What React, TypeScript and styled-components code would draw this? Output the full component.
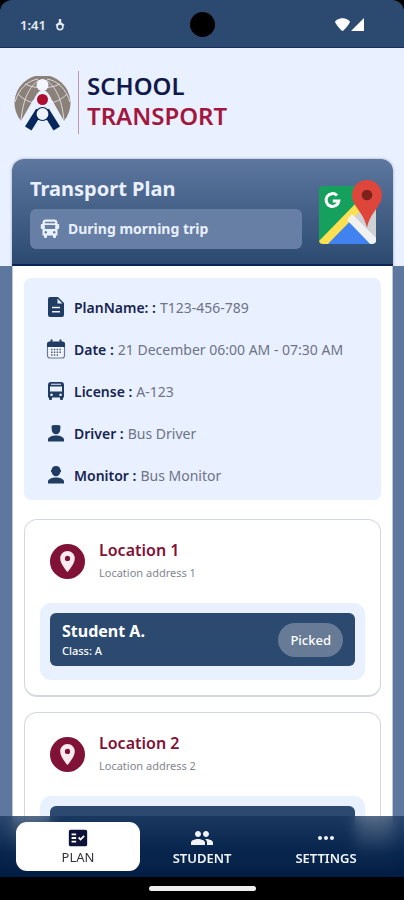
import React from "react";
import styled, { createGlobalStyle, css } from "styled-components";
import { MdFactCheck, MdLocationOn, MdMoreHoriz, MdPeople } from "react-icons/md";

const color = {
  navy: "#2c4a70",
  slate: "#5d779f",
  pale: "#e9f0ff",
  ink: "#162450",
  wine: "#7f1236",
  grey: "#6d7388",
};

const GlobalStyle = createGlobalStyle`
  * { box-sizing: border-box; }
  html, body, #root { height: 100%; }
  body {
    margin: 0;
    background: #000;
    font-family: "Noto Sans", "Open Sans", sans-serif;
    color: ${color.ink};
  }
  h1, h2, h3, p, dl, dt, dd, ul { margin: 0; padding: 0; font-size: inherit; }
  svg { display: block; flex: none; }
`;

const Screen = styled.div`
  display: flex;
  flex-direction: column;
  height: 100vh;
  overflow: hidden;
`;

const StatusBar = styled.header`
  flex: none;
  display: grid;
  grid-template-columns: 1fr auto 1fr;
  align-items: center;
  height: 48px;
  padding: 2px 40px 0 20px;
  background: ${color.navy};
  border-bottom: 1px solid #17305c;
  border-radius: 12px 12px 0 0;
  color: #e6eaf1;
`;

const Clock = styled.div`
  display: flex;
  align-items: center;
  gap: 9px;
  font-size: 13px;
  font-weight: 600;
`;

const Camera = styled.div`
  width: 25px;
  height: 25px;
  margin-left: 20px;
  border-radius: 50%;
  background: #000;
`;

const Signals = styled.div`
  display: flex;
  justify-content: flex-end;
  gap: 1px;
`;

const Viewport = styled.main`
  flex: 1;
  min-height: 0;
  overflow: auto;
  scrollbar-width: none;
  padding-bottom: 84px;
  margin-bottom: -84px;
  background: ${color.slate};
`;

const Top = styled.div`
  padding: 0 11px 0 12px;
  background: ${color.pale};
`;

const Brand = styled.div`
  display: flex;
  align-items: center;
  height: 111px;
  padding-left: 2px;
`;

const BrandName = styled.h1`
  display: flex;
  flex-direction: column;
  margin-left: 7px;
  padding: 0 0 3px 8px;
  border-left: 1px solid #c295aa;
  font-size: 24px;
  line-height: 30px;
  margin-top: -2px;
  font-weight: 600;
  color: #10194a;
`;

const BrandAccent = styled.span`
  color: #a3173f;
`;

const Hero = styled.section`
  display: flex;
  align-items: center;
  gap: 16px;
  height: 107px;
  padding: 0 10px 0 18px;
  border-radius: 12px 12px 0 0;
  border-bottom: 2px solid #0e2357;
  background: linear-gradient(#5d779f, ${color.navy});
  box-shadow: 0 0 3px rgba(30, 50, 90, 0.4);
`;

const HeroText = styled.div`
  flex: 1;
  display: flex;
  flex-direction: column;
  gap: 6px;
  color: ${color.pale};
`;

const HeroTitle = styled.h2`
  font-size: 20px;
  line-height: 28px;
  font-weight: 700;
`;

const Trip = styled.p`
  display: flex;
  align-items: center;
  gap: 8px;
  height: 40px;
  padding: 0 10px;
  border-radius: 6px;
  background: #677ea5;
  font-size: 14px;
  font-weight: 700;
`;

const MapButton = styled.button`
  padding: 2px 0 0;
  border: 0;
  background: none;
`;

const Sheet = styled.div`
  display: flex;
  flex-direction: column;
  gap: 15px;
  margin: 0 11px 0 12px;
  padding: 12px 11px;
  background: #fff;
  border-left: 1px solid #bcc8dc;
  border-right: 1px solid #bcc8dc;
`;

const Details = styled.dl`
  margin-bottom: 4px;
  padding: 8px 22px 4px;
  border-radius: 7px;
  background: ${color.pale};
`;

const DetailRow = styled.div`
  display: flex;
  align-items: center;
  height: 42px;
  font-size: 14px;
  color: #203c63;
`;

const DetailLabel = styled.dt`
  margin: 0 4px 0 8px;
  font-weight: 600;
  white-space: nowrap;
  color: ${color.ink};
`;

const DetailValue = styled.dd`
  white-space: nowrap;
  color: ${color.grey};
`;

const Stops = styled.ul`
  display: flex;
  flex-direction: column;
  gap: 15px;
  list-style: none;
`;

const StopCard = styled.li`
  padding: 16px 15px 15px;
  border: 1px solid #d3d7df;
  border-bottom-width: 2px;
  border-radius: 13px;
`;

const StopHead = styled.div`
  display: flex;
  align-items: center;
  gap: 14px;
  height: 50px;
  margin-bottom: 17px;
  padding-left: 10px;
`;

const PinBadge = styled.span`
  display: grid;
  place-items: center;
  width: 35px;
  height: 35px;
  border-radius: 50%;
  background: ${color.wine};
  color: #fdeaf0;
`;

const StopName = styled.h3`
  font-size: 16px;
  line-height: 24px;
  font-weight: 600;
  color: ${color.wine};
`;

const StopAddress = styled.p`
  font-size: 11px;
  line-height: 22px;
  color: #83868f;
`;

const StudentTray = styled.div`
  padding: 10px 10px 14px;
  border-radius: 11px;
  background: ${color.pale};
`;

const StudentRow = styled.div`
  display: flex;
  align-items: center;
  justify-content: space-between;
  height: 53px;
  padding: 0 12px;
  border-radius: 6px;
  background: ${color.navy};
  color: #fff;
`;

const StudentName = styled.p`
  font-size: 16px;
  line-height: 22px;
  font-weight: 700;
`;

const StudentClass = styled.p`
  font-size: 11px;
  line-height: 18px;
  font-weight: 500;
`;

const StatusPill = styled.button`
  height: 34px;
  padding: 0 12px;
  border: 0;
  border-radius: 17px;
  background: #677b96;
  color: #fff;
  font: 500 13px "Noto Sans", sans-serif;
`;

const Dock = styled.nav`
  position: relative;
  flex: none;
  display: grid;
  grid-template-columns: repeat(3, 1fr);
  height: 61px;
  padding: 6px 16px;
  background: linear-gradient(rgba(20, 50, 90, 0.72), rgba(4, 34, 74, 0.96) 60%, #001c42);
  backdrop-filter: blur(7px);
`;

const Tab = styled.button<{ $active?: boolean }>`
  display: flex;
  flex-direction: column;
  align-items: center;
  justify-content: center;
  padding: 0 0 2px;
  border: 0;
  border-radius: 11px;
  background: none;
  color: #f1f4fa;
  font: 600 13px/16px "Noto Sans", sans-serif;
  ${(p) =>
    p.$active &&
    css`
      background: #fff;
      color: #30323c;
      font-weight: 400;
      svg { color: #0c1238; }
    `}
`;

const GestureBar = styled.footer`
  position: relative;
  flex: none;
  display: grid;
  place-items: center;
  height: 23px;
  background: #000;
`;

const Handle = styled.div`
  width: 107px;
  height: 5px;
  border-radius: 3px;
  background: #eee;
`;

const DebugIcon = () => (
  <svg width="10" height="12" viewBox="0 0 10 12" fill="none" stroke="currentColor" strokeWidth="1.6">
    <path d="M5 0v4" strokeWidth="2.400" />
    <path d="M1 6.300 5 3.500l4 2.800" />
    <circle cx="5" cy="7.800" r="2.900" />
  </svg>
);

const WifiIcon = () => (
  <svg width="15" height="13" viewBox="0 0 15 13" fill="#fff">
    <path d="M0 4Q0 3 2 1.800C5-.4 10-.4 13 1.800Q15 3 15 4 13.500 7.500 8.500 12.400q-1 .8-2 0Q1.500 7.500 0 4z" />
  </svg>
);

const CellIcon = () => (
  <svg width="13" height="13" viewBox="0 0 13 13" fill="#fff">
    <path d="M13 0v13H0z" />
  </svg>
);

const GlobeLogo = () => (
  <svg width="57" height="55" viewBox="0 0 57 55" role="img" aria-label="School Transport logo">
    <path d="M7 45A28 28 0 1 1 50 45L38 24H19z" fill="#8c8179" />
    <g fill="none" stroke="#e3e4ea" strokeWidth="0.9">
      <path d="M25 4C16 10 9 22 7 45M32 4c9 6 16 18 18 41M24 3C13 5 5 13 1 26M33 3c11 2 19 10 23 23" />
      <path d="M11 8c10 5 25 5 35 0M4 18c6 6 11 8 17 9M53 18c-6 6-11 8-17 9" />
    </g>
    <path d="M28.500 14c-3 0-5 3-7 6L6 53h45L36 20c-2-3-4-6-7.500-6z" fill="#e9f0ff" />
    <circle cx="28.500" cy="9" r="6" fill="#f4f7ff" />
    <circle cx="28.500" cy="23.500" r="5.500" fill="#ad0d2e" />
    <path d="M11 50.500 22 33h13l11 17.500-6.500 4L33 44h-9l-6.500 10.500z" fill="#08285b" />
    <circle cx="28.500" cy="38" r="6.500" fill="#edf2ff" stroke="#08285b" strokeWidth="1.200" />
  </svg>
);

const MapLogo = () => (
  <svg width="65" height="65" viewBox="0 0 65 65">
    <defs>
      <clipPath id="tile">
        <rect x="1" y="6" width="57" height="58" rx="4" />
      </clipPath>
    </defs>
    <g clipPath="url(#tile)">
      <path d="M0 5h60v60H0z" fill="#16a05d" />
      <path d="M28 40 60 12v53z" fill="#cfd0d3" />
      <path d="M29 40 58 69H0z" fill="#3f82f0" />
      <path d="M-1 63 42 19l6 6L5 69z" fill="#fbe052" />
      <path d="m29 40 5-6 28 28-6 6z" fill="#f1f1f2" />
    </g>
    <path d="M19 15.500a6.400 6.400 0 1 0 1.800 5.500h-6" fill="none" stroke="#fff" strokeWidth="3" />
    <path d="M49 0C40.500 0 34 6.800 34 15c0 11.500 12 17 15 33 3-16 15-21.500 15-33C64 6.800 57.500 0 49 0z" fill="#de463b" />
    <circle cx="49" cy="15" r="5.300" fill="#7d211a" />
  </svg>
);

const TripBusIcon = () => (
  <svg width="20" height="20" viewBox="0 0 20 20" fill="currentColor">
    <path
      fillRule="evenodd"
      d="M5 .5h10q2.500.3 2.500 3V5h.8q.9 0 .9 1v3q0 1-.9 1h-.8v6.500H16V18q0 1-1 1h-1q-1 0-1-1v-1.500H7V18q0 1-1 1H5q-1 0-1-1v-1.500H2.500V10h-.8q-.9 0-.9-1V6q0-1 .9-1h.8V3.500q0-2.700 2.500-3zM5 2.800v1.400h10V2.800zM4.800 6v4h10.400V6zM5.700 12a1.300 1.300 0 1 0 .1 0zM14.200 12a1.300 1.300 0 1 0 .1 0z"
    />
  </svg>
);

const PlanIcon = () => (
  <svg width="20" height="20" viewBox="0 0 20 20" fill="currentColor">
    <path
      fillRule="evenodd"
      d="M4 0h8l6 6v12q0 2-2 2H4q-2 0-2-2V2q0-2 2-2zM11.500 1.500V6.500h5zM6 9.800v1.500h8V9.800zM6 14v1.500h8V14z"
    />
  </svg>
);

const CalendarIcon = () => (
  <svg width="20" height="20" viewBox="0 0 20 20">
    <rect x="1.500" y="3.500" width="17" height="15.500" rx="2.500" fill="#f1f5ff" stroke="#6a7890" strokeWidth="1.200" />
    <path d="M1 8V5q0-2.500 2.500-2.500h13Q19 2.500 19 5v3z" fill="#203c63" />
    <path d="M5.500.5v4M14.500.5v4" stroke="#203c63" strokeWidth="2" />
    <path d="M5 10.500h1.500m1.300 0h1.500m1.300 0h1.500m1.300 0h1.500M5 13.300h1.500m1.300 0h1.500m1.300 0h1.500m1.300 0h1.500M5 16.100h1.500m1.300 0h1.500m1.300 0h1.500" stroke="#4a5d7c" strokeWidth="1.500" />
  </svg>
);

const BusIcon = () => (
  <svg width="20" height="20" viewBox="0 0 20 20" fill="currentColor">
    <path
      fillRule="evenodd"
      d="M5 1h10q3 0 3 3v12.500h-1V18q0 1-1 1h-1q-1 0-1-1v-1.500H6V18q0 1-1 1H4q-1 0-1-1v-1.500H2V4q0-3 3-3zM5 2.800v.9h10v-.9zM4 5.500v5h12v-5zM5.500 12.500a1.300 1.300 0 1 0 .1 0zM14.500 12.500a1.300 1.300 0 1 0 .1 0z"
    />
  </svg>
);

const DriverIcon = () => (
  <svg width="20" height="20" viewBox="0 0 20 20" fill="currentColor">
    <path d="M5.500 3.200Q5.500 2 10 2t4.500 1.200L14.200 7a4.200 4.200 0 0 1-8.400 0zM2 18.500V16.500c0-2.500 4.500-4 8-4s8 1.500 8 4v2z" />
  </svg>
);

const MonitorIcon = () => (
  <svg width="20" height="20" viewBox="0 0 20 20" fill="currentColor">
    <path d="M10 1c3 0 4.400 1.700 4.400 4H15v2h-.6c-.4 2.500-2 4.200-4.400 4.200S6 9.500 5.600 7H5V5h.6C5.600 2.700 7 1 10 1zM2 18.500V16.500c0-2.500 4.500-4 8-4s8 1.500 8 4v2z" />
  </svg>
);

const details = [
  { icon: <PlanIcon />, label: "PlanName: :", value: "T123-456-789" },
  { icon: <CalendarIcon />, label: "Date :", value: "21 December 06:00 AM - 07:30 AM" },
  { icon: <BusIcon />, label: "License :", value: "A-123" },
  { icon: <DriverIcon />, label: "Driver :", value: "Bus Driver" },
  { icon: <MonitorIcon />, label: "Monitor :", value: "Bus Monitor" },
];

const stops = [
  { name: "Location 1", address: "Location address 1", student: "Student A.", className: "Class: A" },
  { name: "Location 2", address: "Location address 2", student: "", className: "" },
];

export default function App() {
  return (
    <Screen>
      <GlobalStyle />
      <StatusBar>
        <Clock>
          1:41 <DebugIcon />
        </Clock>
        <Camera />
        <Signals>
          <WifiIcon />
          <CellIcon />
        </Signals>
      </StatusBar>

      <Viewport>
        <Top>
          <Brand>
            <GlobeLogo />
            <BrandName>
              SCHOOL <BrandAccent>TRANSPORT</BrandAccent>
            </BrandName>
          </Brand>
          <Hero>
            <HeroText>
              <HeroTitle>Transport Plan</HeroTitle>
              <Trip>
                <TripBusIcon /> During morning trip
              </Trip>
            </HeroText>
            <MapButton aria-label="Open map">
              <MapLogo />
            </MapButton>
          </Hero>
        </Top>

        <Sheet>
          <Details>
            {details.map((d) => (
              <DetailRow key={d.label}>
                {d.icon}
                <DetailLabel>{d.label}</DetailLabel>
                <DetailValue>{d.value}</DetailValue>
              </DetailRow>
            ))}
          </Details>
          <Stops>
            {stops.map((s) => (
              <StopCard key={s.name}>
                <StopHead>
                  <PinBadge>
                    <MdLocationOn size={25} />
                  </PinBadge>
                  <div>
                    <StopName>{s.name}</StopName>
                    <StopAddress>{s.address}</StopAddress>
                  </div>
                </StopHead>
                <StudentTray>
                  <StudentRow>
                    {s.student && (
                      <>
                        <div>
                          <StudentName>{s.student}</StudentName>
                          <StudentClass>{s.className}</StudentClass>
                        </div>
                        <StatusPill>Picked</StatusPill>
                      </>
                    )}
                  </StudentRow>
                </StudentTray>
              </StopCard>
            ))}
          </Stops>
        </Sheet>
      </Viewport>

      <Dock aria-label="Main">
        <Tab $active aria-current="page">
          <MdFactCheck size={22} />
          PLAN
        </Tab>
        <Tab>
          <MdPeople size={24} />
          STUDENT
        </Tab>
        <Tab>
          <MdMoreHoriz size={24} />
          SETTINGS
        </Tab>
      </Dock>
      <GestureBar>
        <Handle />
      </GestureBar>
    </Screen>
  );
}
